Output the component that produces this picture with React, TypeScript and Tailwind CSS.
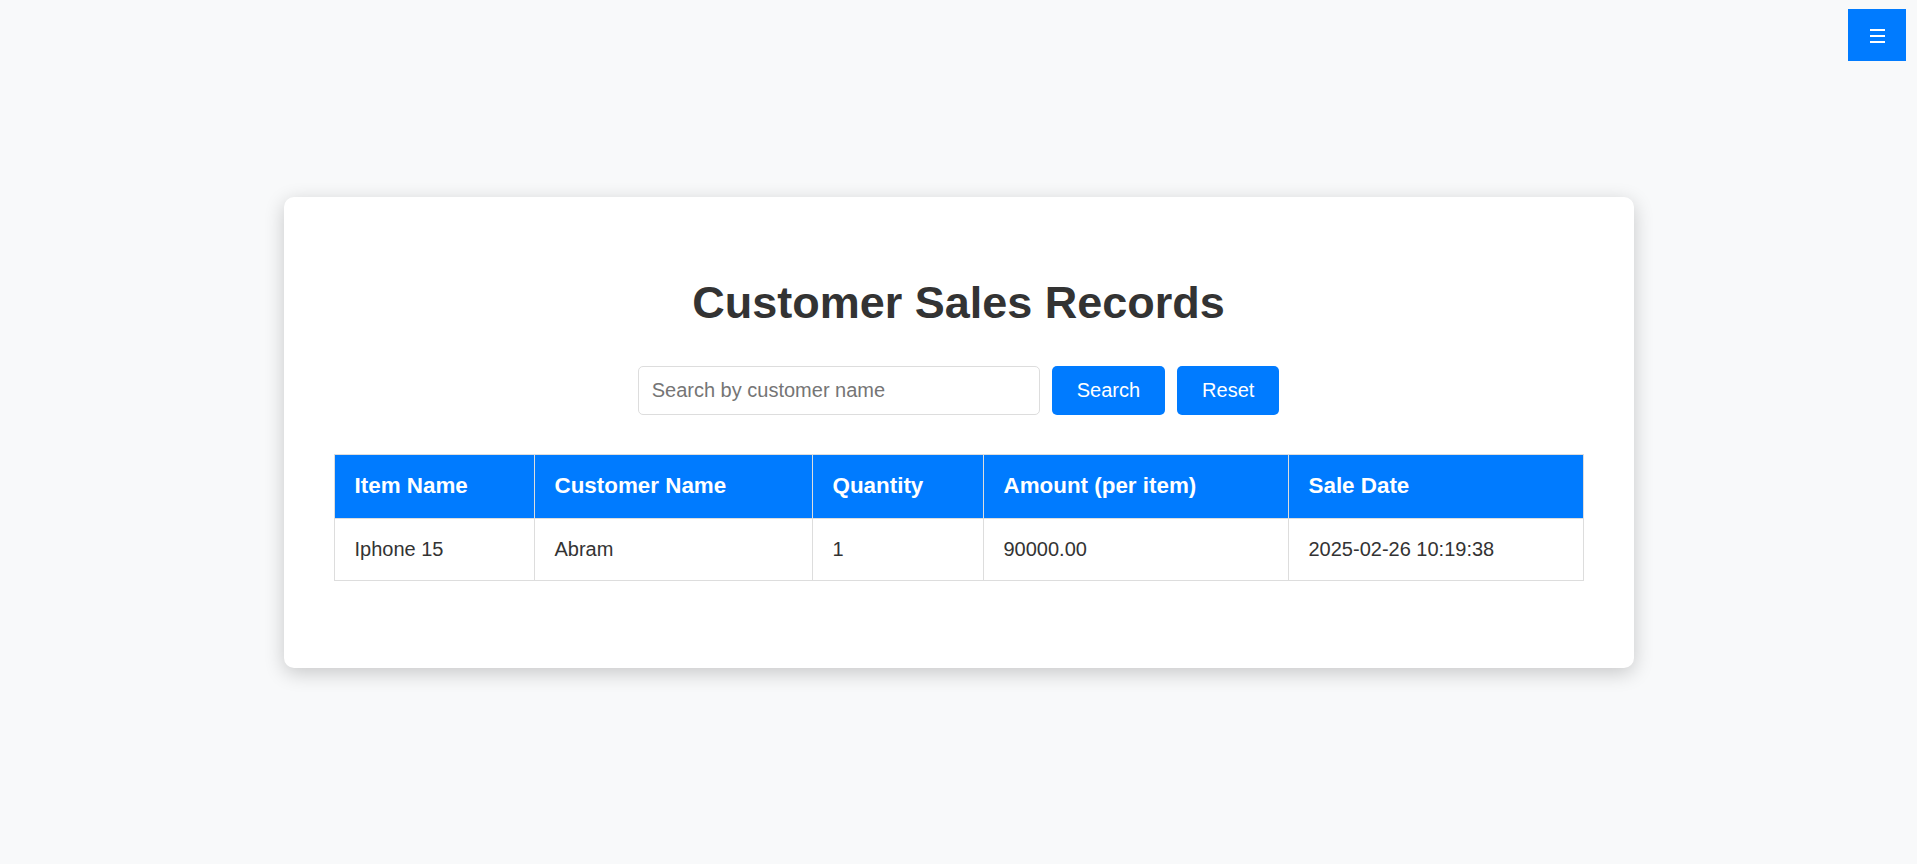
export default function App() {
  const rows = [
    {
      item: 'Iphone 15',
      customer: 'Abram',
      quantity: '1',
      amount: '90000.00',
      date: '2025-02-26 10:19:38',
    },
  ];

  return (
    <div className="min-h-screen bg-[#f8f9fa] flex items-center justify-center font-['Liberation_Sans',Arial,sans-serif] text-[#333]">
      {/* menu toggle */}
      <button className="fixed top-[9px] right-[11px] w-[58px] h-[52px] bg-[#007bff] flex flex-col items-center justify-center gap-[4px] pt-[2px]">
        <span className="block w-[15px] h-[2px] bg-white" />
        <span className="block w-[15px] h-[2px] bg-white" />
        <span className="block w-[15px] h-[2px] bg-white" />
      </button>

      <div className="w-[1350px] bg-white rounded-[10px] shadow-[0_5px_20px_rgba(0,0,0,0.2)] px-[50px] pt-[80px] pb-[87px]">
        <h1 className="text-center text-[45px] leading-[52px] font-bold text-[#333] mb-[37px]">
          Customer Sales Records
        </h1>

        <div className="flex justify-center gap-[12px] mb-[39px]">
          <input
            type="text"
            placeholder="Search by customer name"
            className="w-[402px] h-[49px] border border-[#ddd] rounded-[5px] px-[13px] text-[20px] outline-none placeholder:text-[#757575]"
          />
          <button className="h-[49px] px-[25px] bg-[#007bff] text-white text-[20px] rounded-[5px]">
            Search
          </button>
          <button className="h-[49px] px-[25px] bg-[#007bff] text-white text-[20px] rounded-[5px]">
            Reset
          </button>
        </div>

        <table className="w-full border-collapse text-left">
          <thead>
            <tr className="bg-[#007bff] text-white h-[64px]">
              <th className="w-[200px] border border-[#ddd] px-[20px] text-[22.4px] font-bold">Item Name</th>
              <th className="w-[278px] border border-[#ddd] px-[20px] text-[22.4px] font-bold">Customer Name</th>
              <th className="w-[171px] border border-[#ddd] px-[20px] text-[22.4px] font-bold">Quantity</th>
              <th className="w-[305px] border border-[#ddd] px-[20px] text-[22.4px] font-bold">Amount (per item)</th>
              <th className="border border-[#ddd] px-[20px] text-[22.4px] font-bold">Sale Date</th>
            </tr>
          </thead>
          <tbody>
            {rows.map((r, i) => (
              <tr key={i} className="h-[62px] text-[20px]">
                <td className="border border-[#ddd] px-[20px]">{r.item}</td>
                <td className="border border-[#ddd] px-[20px]">{r.customer}</td>
                <td className="border border-[#ddd] px-[20px]">{r.quantity}</td>
                <td className="border border-[#ddd] px-[20px]">{r.amount}</td>
                <td className="border border-[#ddd] px-[20px]">{r.date}</td>
              </tr>
            ))}
          </tbody>
        </table>
      </div>
    </div>
  );
}
